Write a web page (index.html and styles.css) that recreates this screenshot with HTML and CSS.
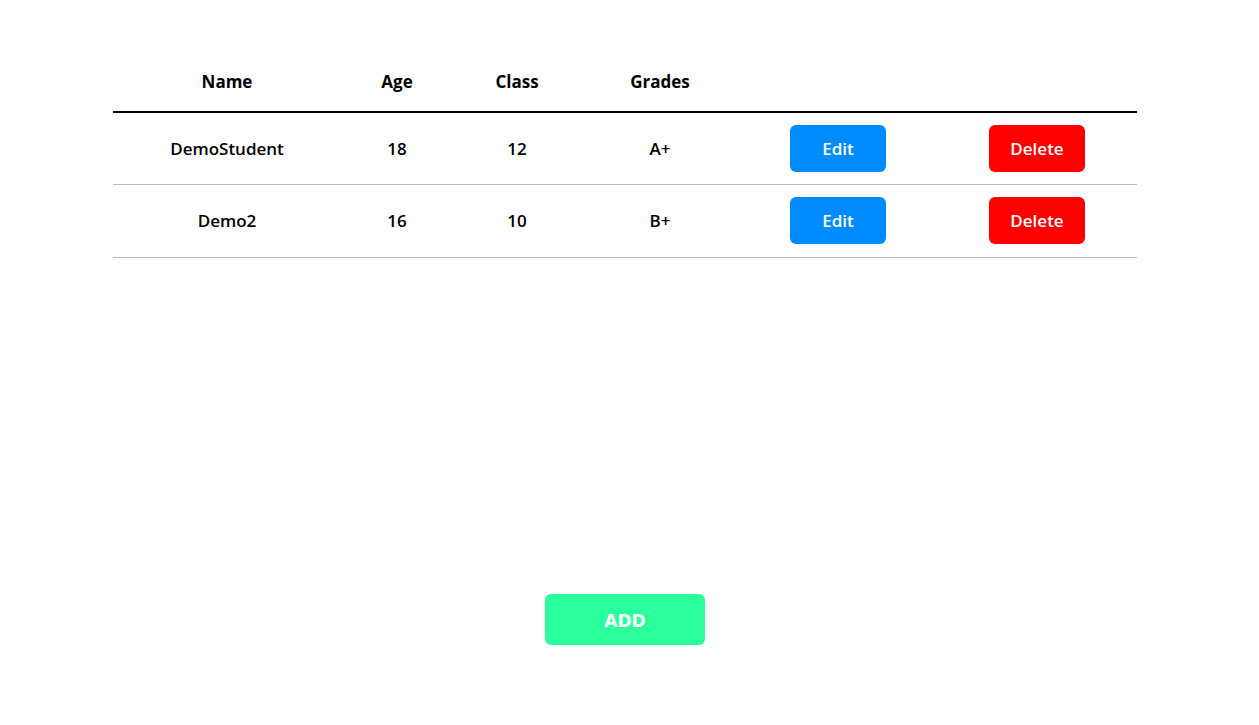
FILE: index.html
```html
<!DOCTYPE html>
<html>
<head>
<meta charset="utf-8">
<link rel="stylesheet" href="styles.css">
</head>
<body>
<div class="page">
  <table class="students">
    <thead>
      <tr>
        <th class="c-name">Name</th>
        <th class="c-age">Age</th>
        <th class="c-class">Class</th>
        <th class="c-grade">Grades</th>
        <th class="c-edit"></th>
        <th class="c-del"></th>
      </tr>
    </thead>
    <tbody>
      <tr>
        <td>DemoStudent</td>
        <td>18</td>
        <td>12</td>
        <td>A+</td>
        <td><button class="btn btn-edit">Edit</button></td>
        <td><button class="btn btn-delete">Delete</button></td>
      </tr>
      <tr>
        <td>Demo2</td>
        <td>16</td>
        <td>10</td>
        <td>B+</td>
        <td><button class="btn btn-edit">Edit</button></td>
        <td><button class="btn btn-delete">Delete</button></td>
      </tr>
    </tbody>
  </table>
  <div class="actions">
    <button class="btn-add">ADD</button>
  </div>
</div>
</body>
</html>
```
FILE: styles.css
```css
html, body {
  margin: 0;
  padding: 0;
  background: #ffffff;
}
body {
  font-family: "Open Sans", "Noto Sans", sans-serif;
  color: #000;
}
.page {
  width: 1250px;
  padding-top: 51px;
  display: flex;
  flex-direction: column;
  align-items: center;
}
.students {
  width: 1024px;
  border-collapse: collapse;
  table-layout: fixed;
}
.students th,
.students td {
  text-align: center;
  padding: 0;
  font-size: 17px;
}
.students th {
  font-weight: 700;
  height: 60px;
  border-bottom: 2px solid #000;
}
.students td {
  font-weight: 600;
  height: 71px;
  border-bottom: 1px solid #bdbdbd;
}
.students tr:last-child td {
  height: 71px;
  padding-bottom: 1px;
}
.c-name { width: 228px; }
.c-age { width: 112px; }
.c-class { width: 128px; }
.c-grade { width: 158px; }
.c-edit { width: 198px; }
.c-del { width: 200px; }
.btn {
  width: 96px;
  height: 47px;
  border: none;
  border-radius: 6px;
  color: #fff;
  font-family: "Open Sans", "Noto Sans", sans-serif;
  font-weight: 600;
  font-size: 17px;
  vertical-align: middle;
}
.btn-edit { background: #008cff; }
.btn-delete { background: #ff0000; }
.actions {
  margin-top: 336px;
  display: flex;
  justify-content: center;
}
.btn-add {
  width: 160px;
  height: 51px;
  padding: 3px 0 0;
  border: none;
  border-radius: 6px;
  background: #2bff9d;
  color: #fff;
  font-family: "DejaVu Sans", Verdana, sans-serif;
  font-weight: 700;
  font-size: 17px;
}
```
